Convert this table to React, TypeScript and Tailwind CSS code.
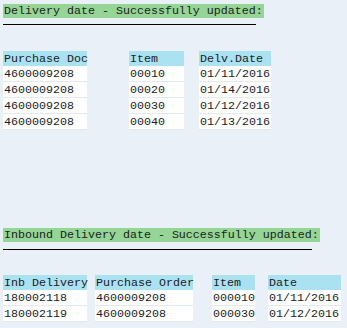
import React from "react";

type Col = { title: string; width: string; ml: string };

const mono = "font-['Liberation_Mono','Courier_New',monospace] text-[11.67px] leading-[14px] text-[#1c1c1c] whitespace-pre";

function Table({ cols, rows }: { cols: { title: string; cls: string }[]; rows: string[][] }) {
  return (
    <div className="flex">
      {cols.map((c, ci) => (
        <div key={ci} className={`flex flex-col ${c.cls}`}>
          <div className={`h-[15px] bg-[#abe2f2] pl-[1px] flex items-center ${mono}`}>{c.title}</div>
          {rows.map((r, ri) => (
            <div key={ri} className={`h-[16px] bg-white border-b border-[#e3e9f1] pl-[1px] flex items-center ${mono}`}>
              {r[ci]}
            </div>
          ))}
        </div>
      ))}
    </div>
  );
}

export default function App() {
  return (
    <div className="w-[347px] h-[328px] bg-[#eaf0f7] pl-[3px] pt-[4px] overflow-hidden flex flex-col items-start">
      <div className={`h-[14px] bg-[#95d596] pl-[1px] pr-[1px] flex items-center ${mono}`}>Delivery date - Successfully updated:</div>
      <div className="mt-[6px] h-[1px] w-[253px] bg-black" />
      <div className="mt-[26px]">
        <Table
          cols={[
            { title: "Purchase Doc", cls: "w-[84px]" },
            { title: "Item", cls: "w-[55px] ml-[42px]" },
            { title: "Delv.Date", cls: "w-[72px] ml-[15px]" },
          ]}
          rows={[
            ["4600009208", "00010", "01/11/2016"],
            ["4600009208", "00020", "01/14/2016"],
            ["4600009208", "00030", "01/12/2016"],
            ["4600009208", "00040", "01/13/2016"],
          ]}
        />
      </div>
      <div className={`mt-[98px] h-[14px] bg-[#95d596] pl-[1px] pr-[1px] flex items-center ${mono}`}>Inbound Delivery date - Successfully updated:</div>
      <div className="mt-[7px] h-[1px] w-[309px] bg-black" />
      <div className="mt-[25px]">
        <Table
          cols={[
            { title: "Inb Delivery", cls: "w-[84px]" },
            { title: "Purchase Order", cls: "w-[98px] ml-[8px]" },
            { title: "Item", cls: "w-[43px] ml-[19px]" },
            { title: "Date", cls: "w-[73px] ml-[13px]" },
          ]}
          rows={[
            ["180002118", "4600009208", "000010", "01/11/2016"],
            ["180002119", "4600009208", "000030", "01/12/2016"],
          ]}
        />
      </div>
    </div>
  );
}
